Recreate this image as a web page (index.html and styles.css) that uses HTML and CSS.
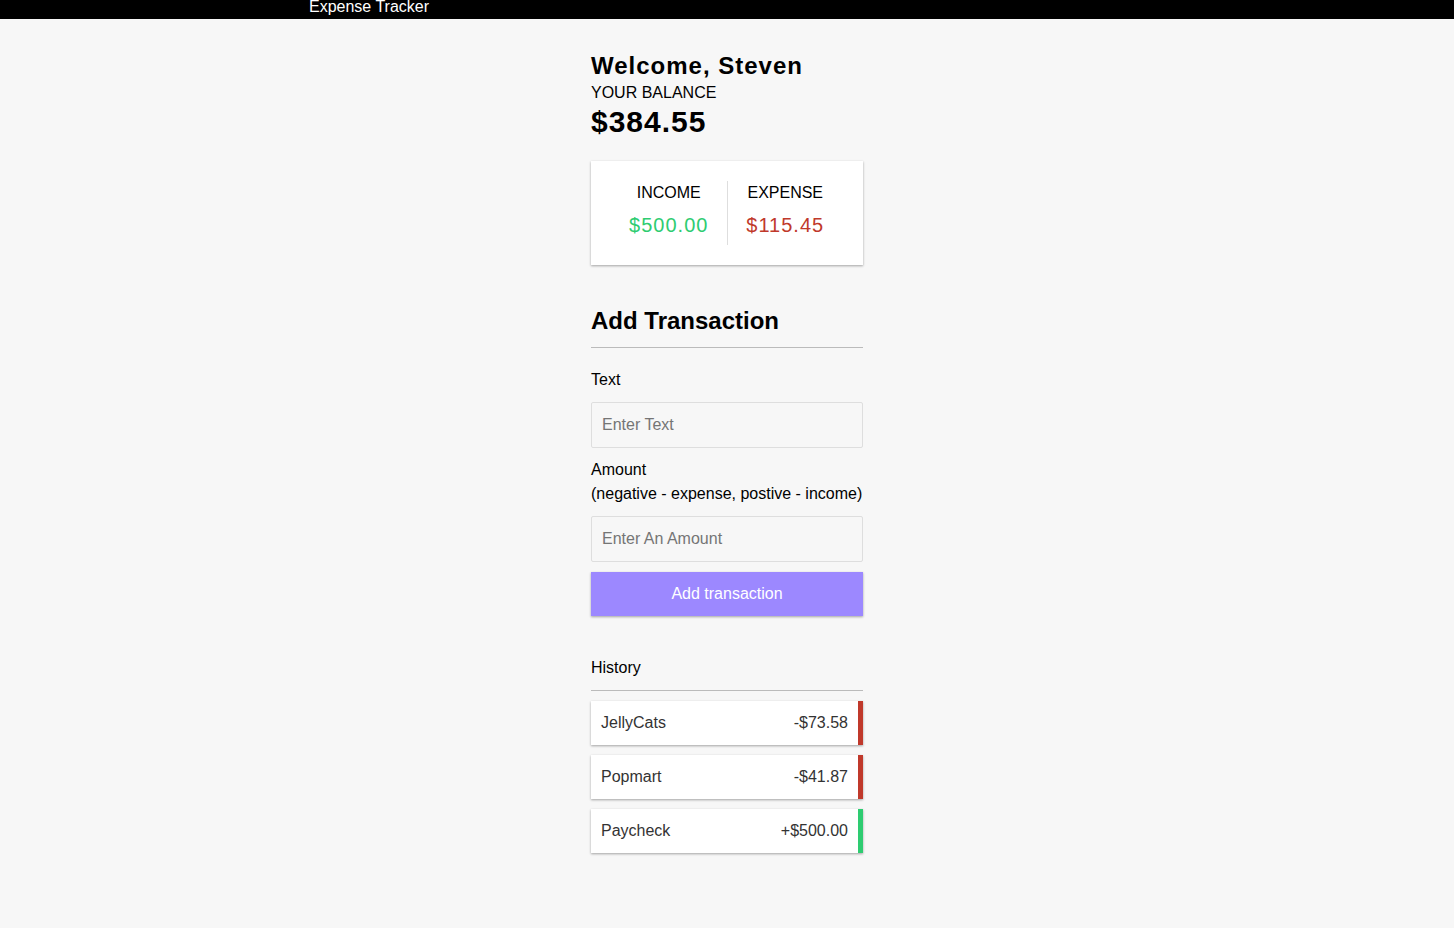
FILE: index.html
```html
<!DOCTYPE html>
<html lang="en">
<head>
<meta charset="UTF-8">
<title>Expense Tracker</title>
<link rel="stylesheet" href="styles.css">
</head>
<body>
<header class="topbar">Expense Tracker</header>
<main class="container">
  <h1 class="welcome">Welcome, Steven</h1>
  <h4 class="balance-label">Your Balance</h4>
  <h1 class="balance">$384.55</h1>

  <div class="inc-exp">
    <div class="inc-exp-col first">
      <h4 class="col-label">Income</h4>
      <p class="money plus">$500.00</p>
    </div>
    <div class="inc-exp-col">
      <h4 class="col-label">Expense</h4>
      <p class="money minus">$115.45</p>
    </div>
  </div>

  <h3 class="section-title">Add Transaction</h3>
  <form class="form">
    <label class="field-label" for="text">Text</label>
    <input class="field" type="text" id="text" placeholder="Enter Text">
    <label class="field-label" for="amount">Amount<br><span class="nowrap">(negative - expense, postive - income)</span></label>
    <input class="field" type="text" id="amount" placeholder="Enter An Amount">
    <button class="btn" type="button">Add transaction</button>
  </form>

  <h3 class="history-title">History</h3>
  <ul class="list">
    <li class="item minus"><span>JellyCats</span><span>-$73.58</span></li>
    <li class="item minus"><span>Popmart</span><span>-$41.87</span></li>
    <li class="item plus"><span>Paycheck</span><span>+$500.00</span></li>
  </ul>
</main>
</body>
</html>
```

FILE: styles.css
```css
* {
  box-sizing: border-box;
}

body {
  margin: 0;
  background-color: #f7f7f7;
  font-family: "Liberation Sans", Arial, sans-serif;
  font-size: 16px;
  line-height: 24px;
  color: #000;
}

.topbar {
  background-color: #000;
  color: #fff;
  height: 19px;
  line-height: 14px;
  padding-left: 309px;
  font-size: 16px;
  overflow: hidden;
}

.container {
  width: 272px;
  margin: 0 auto;
  padding-bottom: 40px;
}

.welcome {
  margin: 33px 0 0;
  font-size: 24px;
  line-height: 28px;
  font-weight: bold;
  letter-spacing: 1px;
}

.balance-label {
  margin: 4px 0 0;
  font-size: 16px;
  line-height: 18px;
  font-weight: normal;
  text-transform: uppercase;
}

.balance {
  margin: 3px 0 0;
  font-size: 30px;
  line-height: 34px;
  font-weight: bold;
  letter-spacing: 1px;
}

.inc-exp {
  margin-top: 22px;
  background-color: #fff;
  box-shadow: 0 1px 3px rgba(0, 0, 0, 0.12), 0 1px 2px rgba(0, 0, 0, 0.24);
  padding: 20px;
  display: flex;
}

.inc-exp-col {
  flex: 1;
  text-align: center;
}

.inc-exp-col.first {
  border-right: 1px solid #dedede;
}

.col-label {
  margin: 0;
  font-size: 16px;
  line-height: 24px;
  font-weight: normal;
  text-transform: uppercase;
}

.money {
  margin: 8px 0;
  font-size: 20px;
  line-height: 24px;
  letter-spacing: 1px;
}

.money.plus {
  color: #2ecc71;
}

.money.minus {
  color: #c0392b;
}

.section-title {
  margin: 42px 0 0;
  padding-bottom: 12px;
  border-bottom: 1px solid #bbb;
  font-size: 24px;
  line-height: 28px;
  font-weight: bold;
}

.form {
  display: flex;
  flex-direction: column;
}

.field-label {
  display: block;
  margin: 10px 0;
}

.field-label:first-child {
  margin-top: 20px;
}

.nowrap {
  white-space: nowrap;
}

.field {
  display: block;
  width: 100%;
  height: 46px;
  padding: 10px;
  border: 1px solid #dedede;
  border-radius: 2px;
  background: transparent;
  font-family: inherit;
  font-size: 16px;
  line-height: 24px;
  color: #333;
  outline: none;
}

.field::placeholder {
  color: #757575;
}

.btn {
  display: block;
  width: 100%;
  margin: 10px 0 0;
  padding: 10px;
  border: 0;
  background-color: #9c88ff;
  color: #fff;
  font-family: inherit;
  font-size: 16px;
  line-height: 24px;
  box-shadow: 0 1px 3px rgba(0, 0, 0, 0.12), 0 1px 2px rgba(0, 0, 0, 0.24);
  cursor: pointer;
}

.history-title {
  margin: 40px 0 10px;
  padding-bottom: 10px;
  border-bottom: 1px solid #bbb;
  font-size: 16px;
  line-height: 24px;
  font-weight: normal;
}

.list {
  list-style: none;
  margin: 0;
  padding: 0;
  display: flex;
  flex-direction: column;
  gap: 10px;
}

.item {
  display: flex;
  justify-content: space-between;
  background-color: #fff;
  color: #333;
  padding: 10px;
  box-shadow: 0 1px 3px rgba(0, 0, 0, 0.12), 0 1px 2px rgba(0, 0, 0, 0.24);
}

.item.minus {
  border-right: 5px solid #c0392b;
}

.item.plus {
  border-right: 5px solid #2ecc71;
}
```
